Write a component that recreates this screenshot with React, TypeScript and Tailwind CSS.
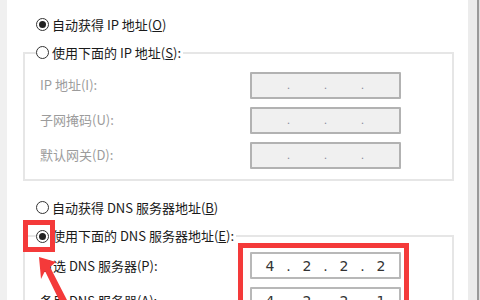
import React from "react";

const font = { fontFamily: '"Noto Sans CJK SC", "Noto Sans", sans-serif' };

function Radio({ checked }: { checked?: boolean }) {
  return (
    <span className="w-[13px] h-[13px] rounded-full border border-[#333] bg-white flex items-center justify-center shrink-0">
      {checked && <span className="w-[7px] h-[7px] rounded-full bg-[#222]" />}
    </span>
  );
}

function IpBox({ value, disabled }: { value?: string[]; disabled?: boolean }) {
  const parts = value ?? ["", "", "", ""];
  return (
    <div
      className={
        "w-[151px] h-[27px] border-2 rounded-[1px] flex items-center justify-center " +
        (disabled ? "bg-[#f0f0f0] border-[#b2b2b2]" : "bg-white border-[#b8b8b8]")
      }
    >
      {parts.map((p, i) => (
        <React.Fragment key={i}>
          {i > 0 && (
            <span
              className={
                "w-[7px] text-center leading-none " +
                (disabled ? "text-[11px] text-[#8c8c9c]" : "text-[14px] text-[#333] font-medium")
              }
              style={{ fontFamily: '"DejaVu Sans", sans-serif' }}
            >
              .
            </span>
          )}
          <span
            className="w-[30px] text-center text-[14px] text-[#333] font-medium leading-none"
            style={{ fontFamily: '"DejaVu Sans", sans-serif' }}
          >
            {p}
          </span>
        </React.Fragment>
      ))}
    </div>
  );
}

function FieldRow({ label, disabled, value }: { label: string; disabled?: boolean; value?: string[] }) {
  return (
    <div className="flex items-center h-[27px]">
      <span className={"w-[210px] text-[13px] " + (disabled ? "text-[#9c9c9c]" : "text-[#1a1a1a]")}>{label}</span>
      <IpBox disabled={disabled} value={value} />
    </div>
  );
}

export default function App() {
  return (
    <div className="relative w-[480px] h-[300px] overflow-hidden flex bg-white" style={font}>
      <div className="w-[7px] bg-[#f0f0f0] shrink-0" />

      <div className="flex-1 flex flex-col">
        <div className="flex items-center gap-[3px] h-[20px] mt-[15px] pl-[29px] text-[13px] text-[#1a1a1a]">
          <Radio checked />
          <span>自动获得 IP 地址(<u>O</u>)</span>
        </div>

        <fieldset className="ml-[16px] w-[431px] mt-[8px] border-2 border-[#e6e6e6] pt-[9px] pb-[10px]">
          <legend className="ml-[11px] pr-[2px] h-[20px] flex items-center gap-[3px] text-[13px] text-[#1a1a1a]">
            <Radio />
            <span>使用下面的 IP 地址(<u>S</u>):</span>
          </legend>
          <div className="pl-[15px] flex flex-col gap-[8px]">
            <FieldRow label="IP 地址(I):" disabled />
            <FieldRow label="子网掩码(U):" disabled />
            <FieldRow label="默认网关(D):" disabled />
          </div>
        </fieldset>

        <div className="flex items-center gap-[3px] h-[20px] mt-[17px] pl-[29px] text-[13px] text-[#1a1a1a]">
          <Radio />
          <span>自动获得 DNS 服务器地址(<u>B</u>)</span>
        </div>

        <fieldset className="ml-[16px] w-[431px] mt-[9px] border-2 border-[#e6e6e6] pt-[6px] pb-[10px]">
          <legend className="ml-[11px] pr-[2px] h-[20px] flex items-center gap-[3px] text-[13px] text-[#1a1a1a]">
            <Radio checked />
            <span>使用下面的 DNS 服务器地址(<u>E</u>):</span>
          </legend>
          <div className="pl-[15px] flex flex-col gap-[8px]">
            <FieldRow label="首选 DNS 服务器(P):" value={["4", "2", "2", "2"]} />
            <FieldRow label="备用 DNS 服务器(A):" value={["4", "2", "2", "1"]} />
          </div>
        </fieldset>
      </div>

      <div className="w-[12px] shrink-0 flex">
        <div className="w-[9px] bg-[#ececec]" />
        <div className="w-[2px] bg-[#9a9a9a]" />
        <div className="w-[1px] bg-[#e0e0e0]" />
      </div>

      {/* annotations */}
      <div className="absolute left-[23px] top-[220px] w-[32px] h-[32px] border-[5px] border-[#f43a3a]" />
      <div className="absolute left-[238px] top-[243px] w-[171px] h-[80px] border-[5px] border-[#f43a3a]" />
      <svg className="absolute left-0 top-0" width="480" height="300" viewBox="0 0 480 300">
        <polygon points="39,257 56,262 50,267 68,302 61,304 45,271 41,279" fill="#f43a3a" />
      </svg>
    </div>
  );
}
